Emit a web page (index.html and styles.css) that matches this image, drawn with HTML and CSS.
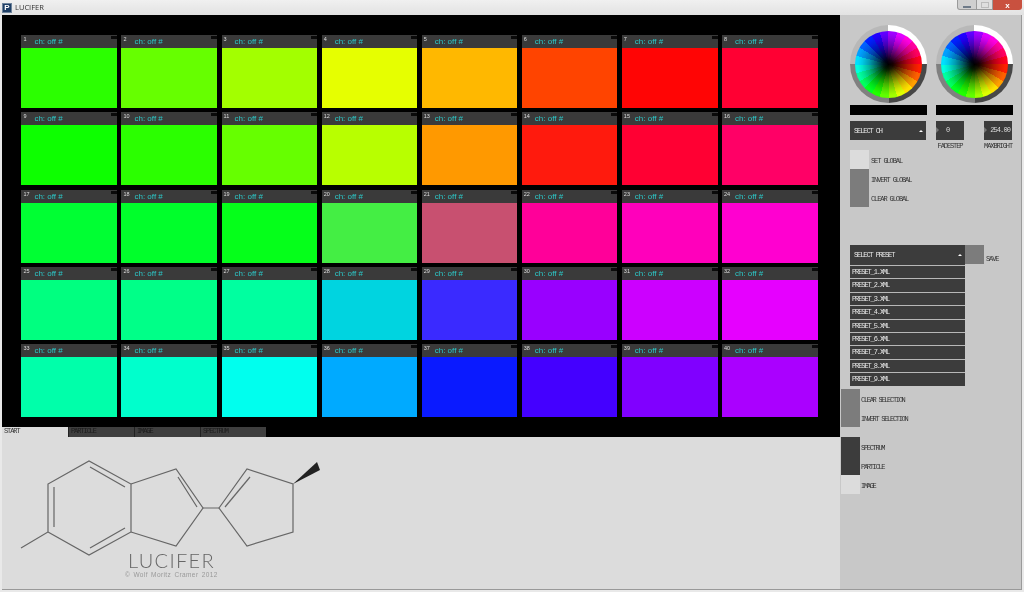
FILE: index.html
```html
<!DOCTYPE html>
<html lang="en">
<head>
<meta charset="utf-8">
<title>LUCIFER</title>
<link rel="stylesheet" href="styles.css">
</head>
<body>
<div class="window">
  <header class="titlebar">
    <div class="appicon">P</div>
    <div class="apptitle">LUCIFER</div>
    <div class="winbtns">
      <div class="winbtn min"><span class="minbar"></span></div>
      <div class="winbtn max"><span class="maxbox"></span></div>
      <div class="winbtn close">x</div>
    </div>
  </header>
  <div class="content">
    <main class="left">
      <section class="stage">
        <div class="grid">
          <div class="card c1"><div class="head"><span class="num">1</span><span class="ch">ch: off #</span><span class="mark"></span></div><div class="fill"></div></div>
          <div class="card c2"><div class="head"><span class="num">2</span><span class="ch">ch: off #</span><span class="mark"></span></div><div class="fill"></div></div>
          <div class="card c3"><div class="head"><span class="num">3</span><span class="ch">ch: off #</span><span class="mark"></span></div><div class="fill"></div></div>
          <div class="card c4"><div class="head"><span class="num">4</span><span class="ch">ch: off #</span><span class="mark"></span></div><div class="fill"></div></div>
          <div class="card c5"><div class="head"><span class="num">5</span><span class="ch">ch: off #</span><span class="mark"></span></div><div class="fill"></div></div>
          <div class="card c6"><div class="head"><span class="num">6</span><span class="ch">ch: off #</span><span class="mark"></span></div><div class="fill"></div></div>
          <div class="card c7"><div class="head"><span class="num">7</span><span class="ch">ch: off #</span><span class="mark"></span></div><div class="fill"></div></div>
          <div class="card c8"><div class="head"><span class="num">8</span><span class="ch">ch: off #</span><span class="mark"></span></div><div class="fill"></div></div>
          <div class="card c9"><div class="head"><span class="num">9</span><span class="ch">ch: off #</span><span class="mark"></span></div><div class="fill"></div></div>
          <div class="card c10"><div class="head"><span class="num">10</span><span class="ch">ch: off #</span><span class="mark"></span></div><div class="fill"></div></div>
          <div class="card c11"><div class="head"><span class="num">11</span><span class="ch">ch: off #</span><span class="mark"></span></div><div class="fill"></div></div>
          <div class="card c12"><div class="head"><span class="num">12</span><span class="ch">ch: off #</span><span class="mark"></span></div><div class="fill"></div></div>
          <div class="card c13"><div class="head"><span class="num">13</span><span class="ch">ch: off #</span><span class="mark"></span></div><div class="fill"></div></div>
          <div class="card c14"><div class="head"><span class="num">14</span><span class="ch">ch: off #</span><span class="mark"></span></div><div class="fill"></div></div>
          <div class="card c15"><div class="head"><span class="num">15</span><span class="ch">ch: off #</span><span class="mark"></span></div><div class="fill"></div></div>
          <div class="card c16"><div class="head"><span class="num">16</span><span class="ch">ch: off #</span><span class="mark"></span></div><div class="fill"></div></div>
          <div class="card c17"><div class="head"><span class="num">17</span><span class="ch">ch: off #</span><span class="mark"></span></div><div class="fill"></div></div>
          <div class="card c18"><div class="head"><span class="num">18</span><span class="ch">ch: off #</span><span class="mark"></span></div><div class="fill"></div></div>
          <div class="card c19"><div class="head"><span class="num">19</span><span class="ch">ch: off #</span><span class="mark"></span></div><div class="fill"></div></div>
          <div class="card c20"><div class="head"><span class="num">20</span><span class="ch">ch: off #</span><span class="mark"></span></div><div class="fill"></div></div>
          <div class="card c21"><div class="head"><span class="num">21</span><span class="ch">ch: off #</span><span class="mark"></span></div><div class="fill"></div></div>
          <div class="card c22"><div class="head"><span class="num">22</span><span class="ch">ch: off #</span><span class="mark"></span></div><div class="fill"></div></div>
          <div class="card c23"><div class="head"><span class="num">23</span><span class="ch">ch: off #</span><span class="mark"></span></div><div class="fill"></div></div>
          <div class="card c24"><div class="head"><span class="num">24</span><span class="ch">ch: off #</span><span class="mark"></span></div><div class="fill"></div></div>
          <div class="card c25"><div class="head"><span class="num">25</span><span class="ch">ch: off #</span><span class="mark"></span></div><div class="fill"></div></div>
          <div class="card c26"><div class="head"><span class="num">26</span><span class="ch">ch: off #</span><span class="mark"></span></div><div class="fill"></div></div>
          <div class="card c27"><div class="head"><span class="num">27</span><span class="ch">ch: off #</span><span class="mark"></span></div><div class="fill"></div></div>
          <div class="card c28"><div class="head"><span class="num">28</span><span class="ch">ch: off #</span><span class="mark"></span></div><div class="fill"></div></div>
          <div class="card c29"><div class="head"><span class="num">29</span><span class="ch">ch: off #</span><span class="mark"></span></div><div class="fill"></div></div>
          <div class="card c30"><div class="head"><span class="num">30</span><span class="ch">ch: off #</span><span class="mark"></span></div><div class="fill"></div></div>
          <div class="card c31"><div class="head"><span class="num">31</span><span class="ch">ch: off #</span><span class="mark"></span></div><div class="fill"></div></div>
          <div class="card c32"><div class="head"><span class="num">32</span><span class="ch">ch: off #</span><span class="mark"></span></div><div class="fill"></div></div>
          <div class="card c33"><div class="head"><span class="num">33</span><span class="ch">ch: off #</span><span class="mark"></span></div><div class="fill"></div></div>
          <div class="card c34"><div class="head"><span class="num">34</span><span class="ch">ch: off #</span><span class="mark"></span></div><div class="fill"></div></div>
          <div class="card c35"><div class="head"><span class="num">35</span><span class="ch">ch: off #</span><span class="mark"></span></div><div class="fill"></div></div>
          <div class="card c36"><div class="head"><span class="num">36</span><span class="ch">ch: off #</span><span class="mark"></span></div><div class="fill"></div></div>
          <div class="card c37"><div class="head"><span class="num">37</span><span class="ch">ch: off #</span><span class="mark"></span></div><div class="fill"></div></div>
          <div class="card c38"><div class="head"><span class="num">38</span><span class="ch">ch: off #</span><span class="mark"></span></div><div class="fill"></div></div>
          <div class="card c39"><div class="head"><span class="num">39</span><span class="ch">ch: off #</span><span class="mark"></span></div><div class="fill"></div></div>
          <div class="card c40"><div class="head"><span class="num">40</span><span class="ch">ch: off #</span><span class="mark"></span></div><div class="fill"></div></div>
        </div>
        <nav class="tabs">
          <div class="tab active">START</div>
          <div class="tab">PARTICLE</div>
          <div class="tab">IMAGE</div>
          <div class="tab">SPECTRUM</div>
        </nav>
      </section>
      <section class="start">
        <svg class="molecule" width="838" height="152" viewBox="0 437 838 152" aria-label="LUCIFER logo">
          <g fill="none" stroke="#666" stroke-width="1.2">
            <path d="M19 548 46 532V484L87 461 129 484V532L87 555 46 532"/>
            <path d="M52 527V487M88 467 123 487M88 548 123 528"/>
            <path d="M129 484 174 469 201 508 174 546 129 532"/>
            <path d="M176 477 195 507M201 508H217"/>
            <path d="M217 508 245 469 291 484V532L245 546Z"/>
            <path d="M223 507 248 477"/>
          </g>
          <path class="wedge" d="M291 484 315 462 318 470Z"/>
          <text class="logo" x="126" y="568">LUCIFER</text>
          <text class="copy" x="123" y="577">© Wolf Moritz Cramer 2012</text>
        </svg>
      </section>
    </main>
    <aside class="panel">
      <div class="wheels">
        <div class="ring"><div class="wheel"></div></div>
        <div class="ring"><div class="wheel"></div></div>
      </div>
      <div class="bars">
        <div class="bar"></div>
        <div class="bar"></div>
      </div>
      <div class="selectors">
        <div class="dropdown chsel"><span>SELECT CH</span><span class="caret"></span></div>
        <div class="field first">
          <div class="numbox"><span class="tri"></span><span class="val zero">0</span></div>
          <div class="flabel">FADESTEP</div>
        </div>
        <div class="field second">
          <div class="numbox"><span class="tri"></span><span class="val far">254.00</span></div>
          <div class="flabel">MAXBRIGHT</div>
        </div>
      </div>
      <div class="toggles">
        <div class="row"><span class="sw light"></span><span class="lbl">SET GLOBAL</span></div>
        <div class="row"><span class="sw mid"></span><span class="lbl">INVERT GLOBAL</span></div>
        <div class="row"><span class="sw mid"></span><span class="lbl">CLEAR GLOBAL</span></div>
      </div>
      <div class="presets">
        <div class="presethead">
          <div class="dropdown presetsel"><span>SELECT PRESET</span><span class="caret"></span></div>
          <span class="sw mid"></span><span class="lbl">SAVE</span>
        </div>
        <ul class="list">
          <li>PRESET_1.XML</li>
          <li>PRESET_2.XML</li>
          <li>PRESET_3.XML</li>
          <li>PRESET_4.XML</li>
          <li>PRESET_5.XML</li>
          <li>PRESET_6.XML</li>
          <li>PRESET_7.XML</li>
          <li>PRESET_8.XML</li>
          <li>PRESET_9.XML</li>
        </ul>
      </div>
      <div class="selection">
        <div class="row"><span class="sw mid"></span><span class="lbl">CLEAR SELECTION</span></div>
        <div class="row"><span class="sw mid"></span><span class="lbl">INVERT SELECTION</span></div>
      </div>
      <div class="modes">
        <div class="row"><span class="sw dark"></span><span class="lbl">SPECTRUM</span></div>
        <div class="row"><span class="sw dark"></span><span class="lbl">PARTICLE</span></div>
        <div class="row"><span class="sw light"></span><span class="lbl">IMAGE</span></div>
      </div>
    </aside>
  </div>
</div>
</body>
</html>
```
FILE: styles.css
```css
* { box-sizing: border-box; }
html, body { margin: 0; padding: 0; }
body { width: 1024px; height: 592px; overflow: hidden; background: #e9e9e9; font-family: "Liberation Mono", monospace; }
.window { width: 1024px; height: 592px; display: flex; flex-direction: column; filter: blur(0.35px); }

.titlebar { height: 15px; display: flex; align-items: flex-start; background: linear-gradient(#f0f0f0, #e2e2e2); }
.appicon { width: 10px; height: 10px; margin: 3px 0 0 2px; background: #1f3f66; border: 1px solid #6f849c; color: #fff; font: bold 8px/8px "Liberation Sans", sans-serif; text-align: center; }
.apptitle { margin: 0 0 0 3px; font: 7.5px/14px "Open Sans", sans-serif; color: #333; }
.winbtns { margin-left: auto; margin-right: 2px; display: flex; height: 10px; }
.winbtn { height: 10px; border: 1px solid #9a9a9a; border-top: 0; background: #d9d9d9; display: flex; align-items: center; justify-content: center; }
.min { width: 20px; border-radius: 0 0 0 3px; background: #cfcfcf; }
.max { width: 16px; border-left: 0; background: #dedede; }
.close { width: 29px; border: 0; border-radius: 0 0 3px 0; background: #c9513f; color: #fff; font: bold 8px/9px "Liberation Sans", sans-serif; }
.minbar { width: 8px; height: 2px; background: #6e7a88; margin-top: 4px; }
.maxbox { width: 8px; height: 6px; border: 1px solid #bbb; }

.content { flex: 1; display: flex; min-height: 0; padding: 0 2px 2px 2px; }
.left { width: 838px; display: flex; flex-direction: column; }
.stage { height: 422px; background: #000; padding-top: 20px; display: flex; flex-direction: column; }
.grid { display: grid; grid-template-columns: repeat(8, 95.7px); grid-auto-rows: 73px; column-gap: 4.4px; row-gap: 4.25px; margin-left: 19.4px; }
.card { display: flex; flex-direction: column; }
.head { height: 13px; background: #3a3a3a; position: relative; display: flex; }
.num { width: 13px; padding: 1px 0 0 2px; font: 5.5px/7px "Liberation Sans", sans-serif; color: #ddd; }
.ch { font: 8px/14px "Liberation Sans", sans-serif; color: #2cc8c8; }
.mark { position: absolute; right: 0; top: 1px; width: 6px; height: 3px; background: #0a0a0a; }
.fill { height: 60px; }

.c1 .fill { background: #2bff00; } .c2 .fill { background: #66ff00; } .c3 .fill { background: #a3ff00; } .c4 .fill { background: #e6ff00; }
.c5 .fill { background: #ffb800; } .c6 .fill { background: #ff4400; } .c7 .fill { background: #ff0505; } .c8 .fill { background: #ff0033; }
.c9 .fill { background: #0dff00; } .c10 .fill { background: #2bff00; } .c11 .fill { background: #66ff00; } .c12 .fill { background: #b8ff00; }
.c13 .fill { background: #ff9900; } .c14 .fill { background: #ff1a0d; } .c15 .fill { background: #ff0033; } .c16 .fill { background: #ff0066; }
.c17 .fill { background: #00ff33; } .c18 .fill { background: #00ff2b; } .c19 .fill { background: #05ff1a; } .c20 .fill { background: #44ee44; }
.c21 .fill { background: #c85070; } .c22 .fill { background: #ff0099; } .c23 .fill { background: #ff00bb; } .c24 .fill { background: #ff00d0; }
.c25 .fill { background: #00ff80; } .c26 .fill { background: #00ff88; } .c27 .fill { background: #00ffa0; } .c28 .fill { background: #00d4e0; }
.c29 .fill { background: #3a2aff; } .c30 .fill { background: #9900ff; } .c31 .fill { background: #cc00ff; } .c32 .fill { background: #e600ff; }
.c33 .fill { background: #00ffaa; } .c34 .fill { background: #00ffcc; } .c35 .fill { background: #00ffee; } .c36 .fill { background: #00aaff; }
.c37 .fill { background: #0a1aff; } .c38 .fill { background: #4400ff; } .c39 .fill { background: #8000ff; } .c40 .fill { background: #aa00ff; }

.tabs { display: flex; margin-top: 10px; height: 10px; }
.tab { width: 66px; height: 10px; background: #3f3f3f; color: #1c1c1c; padding-left: 2px; font-size: 7px; line-height: 9px; letter-spacing: -1.1px; border-left: 1px solid #222; }
.tab.active { background: #dcdcdc; color: #333; border-left: 0; }
.start { flex: 1; background: #dcdcdc; border-bottom: 1px solid #999; min-height: 0; }
.molecule { display: block; }
.wedge { fill: #222; }
.logo { font: 300 20px "Lato", sans-serif; fill: #666; letter-spacing: 1.3px; }
.copy { font: 6.5px "Liberation Sans", sans-serif; fill: #999; letter-spacing: 0.4px; word-spacing: 1px; }

.panel { width: 182px; background: #c8c8c8; border-right: 1px solid #9a9a9a; border-bottom: 1px solid #999; padding: 10px 0 0 0; }
.wheels, .bars { display: flex; gap: 9px; padding-left: 10px; }
.ring { width: 77px; height: 78px; border-radius: 50%; display: flex; align-items: center; justify-content: center;
  background: conic-gradient(#fff 0 90deg, #474747 90deg 180deg, #808080 180deg 270deg, #b8b8b8 270deg 360deg); }
.wheel { width: 67px; height: 67px; border-radius: 50%;
  background:
    radial-gradient(circle closest-side, #000 0, rgba(0,0,0,0.9) 14%, rgba(0,0,0,0.6) 35%, rgba(0,0,0,0.3) 58%, rgba(0,0,0,0.1) 78%, rgba(0,0,0,0) 92%),
    conic-gradient(
      hsl(277.5 100% 50%) 0 15deg, hsl(292.5 100% 50%) 0 30deg, hsl(307.5 100% 50%) 0 45deg, hsl(322.5 100% 50%) 0 60deg,
      hsl(337.5 100% 50%) 0 75deg, hsl(352.5 100% 50%) 0 90deg, hsl(7.5 100% 50%) 0 105deg, hsl(22.5 100% 50%) 0 120deg,
      hsl(37.5 100% 50%) 0 135deg, hsl(52.5 100% 50%) 0 150deg, hsl(67.5 100% 50%) 0 165deg, hsl(82.5 100% 50%) 0 180deg,
      hsl(97.5 100% 50%) 0 195deg, hsl(112.5 100% 50%) 0 210deg, hsl(127.5 100% 50%) 0 225deg, hsl(142.5 100% 50%) 0 240deg,
      hsl(157.5 100% 50%) 0 255deg, hsl(172.5 100% 50%) 0 270deg, hsl(187.5 100% 50%) 0 285deg, hsl(202.5 100% 50%) 0 300deg,
      hsl(217.5 100% 50%) 0 315deg, hsl(232.5 100% 50%) 0 330deg, hsl(247.5 100% 50%) 0 345deg, hsl(262.5 100% 50%) 0 360deg); }
.bars { margin-top: 2px; }
.bar { width: 77px; height: 10px; background: #000; }

.selectors { display: flex; margin-top: 6px; padding-left: 10px; align-items: flex-start; }
.dropdown { background: #3c3c3c; color: #e8e8e8; font-size: 7px; letter-spacing: -1.1px; display: flex; align-items: center; justify-content: space-between; padding: 0 3px 0 4px; }
.chsel { width: 76px; height: 19px; }
.caret { width: 0; height: 0; border-left: 2px solid transparent; border-right: 2px solid transparent; border-bottom: 2px solid #fff; }
.field { width: 28px; }
.field.first { margin-left: 10px; }
.field.second { margin-left: 20px; }
.numbox { width: 28px; height: 19px; background: #3c3c3c; position: relative; color: #ddd; font-size: 7px; line-height: 19px; letter-spacing: -0.9px; }
.tri { position: absolute; left: 0; top: 6px; width: 0; height: 0; border-left: 3px solid #777; border-top: 3.5px solid transparent; border-bottom: 3.5px solid transparent; }
.val { position: absolute; }
.val.zero { left: 10px; }
.val.far { right: 2px; }
.flabel { margin-top: 2px; font-size: 7px; line-height: 8px; letter-spacing: -1.1px; color: #333; text-align: center; white-space: nowrap; }
.second .flabel { text-align: right; }

.toggles { padding-left: 10px; }
.row { display: flex; height: 19px; align-items: center; }
.sw { width: 19px; height: 19px; flex: none; }
.sw.light { background: #dcdcdc; }
.sw.mid { background: #7c7c7c; }
.sw.dark { background: #3c3c3c; }
.lbl { margin-left: 2px; padding-top: 3px; font-size: 7px; letter-spacing: -1.1px; color: #333; white-space: nowrap; }

.presets { margin-top: 38px; padding-left: 10px; }
.presethead { display: flex; align-items: flex-start; }
.presetsel { width: 115px; height: 20px; }
.presethead .lbl { margin-top: 7px; }
.list { list-style: none; margin: 0; padding: 0; width: 115px; }
.list li { height: 13.4px; background: #3c3c3c; border-top: 1px solid #b8b8b8; color: #e8e8e8; font-size: 7px; line-height: 12px; letter-spacing: -1.1px; padding-left: 2px; }
.selection { margin-top: 3.4px; padding-left: 1px; }
.modes { margin-top: 10px; padding-left: 1px; }
.selection .lbl, .modes .lbl { margin-left: 1px; letter-spacing: -1.3px; }
```
